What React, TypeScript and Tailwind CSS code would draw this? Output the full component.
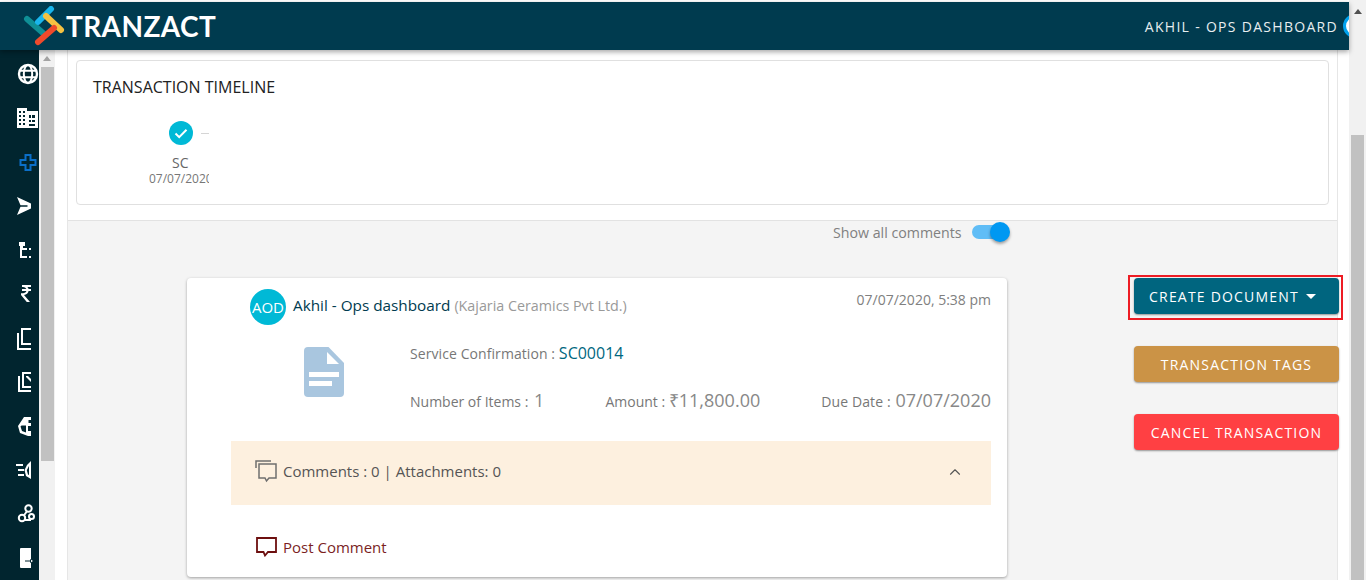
import { ChevronUp } from "lucide-react";

function Logo() {
  return (
    <svg width="44" height="40" viewBox="0 0 44 40" className="shrink-0">
      <g fill="none" strokeWidth="6" strokeLinecap="round">
        <path d="M4 13L20 27" stroke="#0f8f96" />
        <path d="M28 3L15 16" stroke="#19b5ec" />
        <path d="M23 10L38 24" stroke="#f5c242" />
        <path d="M31 22L15 36" stroke="#ef4a2c" />
      </g>
    </svg>
  );
}

function SideIcon({ children, w = 14, active = false }: { children: React.ReactNode; w?: number; active?: boolean }) {
  return (
    <div className={active ? "h-11 flex items-center pl-[17px] text-[#0b6fc9]" : "h-11 flex items-center pl-[17px] text-white"}>
      <svg width={w} height="24" viewBox={`0 0 ${w} 24`} fill="currentColor" className="shrink-0 overflow-visible">
        {children}
      </svg>
    </div>
  );
}

function Sidebar() {
  return (
    <aside className="w-[39px] shrink-0 bg-[#01252f] pt-[2px] overflow-hidden">
      <SideIcon w={22}>
        <circle cx="11" cy="12" r="9" fill="none" stroke="currentColor" strokeWidth="2.400" />
        <ellipse cx="11" cy="12" rx="4.200" ry="9" fill="none" stroke="currentColor" strokeWidth="2" />
        <path d="M2 8.800h18M2 15.200h18" stroke="currentColor" strokeWidth="2" />
      </SideIcon>
      <SideIcon w={22}>
        <path fillRule="evenodd" d="M0 2h10v3h11v17H0zM2 5v2h2V5zm4 0v2h2V5zM2 9v2h2V9zm4 0v2h2V9zM2 13v2h2v-2zm4 0v2h2v-2zM2 17v2h2v-2zm4 0v2h2v-2zM12 9v3h2V9zm3 0v3h3V9zM12 14v2h2v-2zm3 0v2h3v-2zM12 18v2h6v-2z" />
      </SideIcon>
      <SideIcon w={22} active>
        <path d="M8.500 5h5v5h5v5h-5v5h-5v-5h-5v-5h5z" fill="none" stroke="currentColor" strokeWidth="2" />
      </SideIcon>
      <SideIcon>
        <path d="M0 3L14 9.500v5L0 21l3.500-8.300h7v-1.400h-7z" />
      </SideIcon>
      <SideIcon>
        <path d="M2 4h6v4H6v2h4v2H5v6h5v2H3V8H2zM12 10h2v2h-2zM12 18h2v2h-2z" />
      </SideIcon>
      <SideIcon>
        <path d="M5 3h9v2h-3.600c.6.600 1 1.300 1.200 2H14v2h-2.400c-.4 2.300-2.200 3.800-4.600 4l6 7h-3.200L4 13v-1.800h2c1.700 0 3-.8 3.400-2.200H5V7h4.300C8.800 5.800 7.500 5 6 5H5z" />
      </SideIcon>
      <SideIcon>
        <path d="M4 2h10v2H6v13h8v2H4z" />
        <path d="M0 7h2v15h12v2H0z" />
      </SideIcon>
      <SideIcon>
        <path d="M5 2h9v2H7v12h7v2H5z" />
        <path d="M1 6h2v14h11v2H1z" />
        <path d="M9 6h2l3 3v3L9 7z" />
      </SideIcon>
      <SideIcon>
        <path fillRule="evenodd" d="M7 3h7v19h-3l-8-3-2-7zM4.500 11.500L3.500 12.500 5 17l4 1.500v-7zM11.500 6h2.500v3h-2.500zM11 12v5h3v-5z" />
      </SideIcon>
      <SideIcon>
        <path d="M-1 6h7v2h-7zM1 11h6v2H1zM1 16h6v2H1z" />
        <path fillRule="evenodd" d="M14 3v18l-5-3-1.500-6L10 7zM12 8L9.800 12.300 11 16.500l1 .6z" />
      </SideIcon>
      <SideIcon>
        <g fill="none" stroke="currentColor" strokeWidth="2">
          <circle cx="5" cy="16" r="3.200" />
          <circle cx="11.500" cy="6.500" r="3.200" />
          <path d="M9.800 9.500L6.500 14M8 18h6" />
          <circle cx="14.500" cy="14.500" r="2.500" />
        </g>
      </SideIcon>
      <SideIcon>
        <path fillRule="evenodd" d="M4 2h10v12.500h-1V13l3 2-3 2v-1.500H8v-1h6V22H4a1 1 0 0 1-1-1V3a1 1 0 0 1 1-1z" />
      </SideIcon>
    </aside>
  );
}

function ScrollBar({ thumbClass, arrowClass }: { thumbClass: string; arrowClass: string }) {
  return (
    <div className="w-full h-full flex flex-col items-center bg-[#f1f1f1] overflow-hidden">
      <div className={arrowClass} />
      <div className={thumbClass} />
    </div>
  );
}

function Timeline() {
  return (
    <section className="bg-white h-[171px] pt-[10px] px-2 border-b border-[#e2e2e2]">
      <div className="h-[145px] border border-[#e0e0e0] rounded-[4px] pl-4 pt-[15px]">
        <h2 className="text-[16px] leading-[22px] text-[#222]">TRANSACTION TIMELINE</h2>
        <div className="mt-[23px] ml-[56px] w-[60px] overflow-hidden">
          <div className="flex items-center h-6 pl-5">
            <div className="w-6 h-6 rounded-full bg-[#00b9d6] flex items-center justify-center shrink-0">
              <svg width="14" height="11" viewBox="0 0 14 11" fill="none">
                <path d="M1.500 5.500L5.200 9.200L12.500 1.800" stroke="#fff" strokeWidth="2" />
              </svg>
            </div>
            <div className="ml-2 w-2 h-px bg-[#d5d5d5]" />
          </div>
          <div className="flex flex-col mt-[9px]">
            <span className="text-[14px] leading-[18px] text-[#666] ml-[23px]">SC</span>
            <span className="text-[12px] leading-[14px] text-[#777] whitespace-nowrap">07/07/2020</span>
          </div>
        </div>
      </div>
    </section>
  );
}

function CommentCard() {
  return (
    <article className="ml-[119px] w-[820px] h-[299px] bg-white rounded-[4px] shadow-[0_1px_3px_rgba(0,0,0,0.35)] pl-[44px] pr-4">
      <div className="flex items-start pt-[11px] pl-[19px]">
        <div className="w-9 h-9 rounded-full bg-[#00b9d6] text-white text-[15px] flex items-center justify-center shrink-0">AOD</div>
        <p className="ml-[7px] mt-[6px] text-[15.300px] leading-5 text-[#003b4f]">
          Akhil - Ops dashboard <span className="text-[14.300px] text-[#999]">(Kajaria Ceramics Pvt Ltd.)</span>
        </p>
        <span className="ml-auto mt-[1px] text-[14px] leading-5 text-[#808080]">07/07/2020, 5:38 pm</span>
      </div>
      <div className="flex mt-[19px] h-[94px]">
        <svg width="40" height="50" viewBox="0 0 40 50" className="ml-[73px] mt-[3px] shrink-0">
          <path d="M4 0h20.500L40 16v30a4 4 0 0 1-4 4H4a4 4 0 0 1-4-4V4a4 4 0 0 1 4-4z" fill="#a9c6df" />
          <path d="M23 5l12 12H23z" fill="#fff" />
          <path d="M5 25h30v5H5zM5 34h23v5H5z" fill="#fff" />
        </svg>
        <div className="ml-[66px] flex-1">
          <p className="mt-[-1px] text-[14px] leading-5 font-medium text-[#777] tracking-[0.08px]">
            Service Confirmation : <span className="text-[16px] font-medium tracking-normal text-[#00677f]">SC00014</span>
          </p>
          <div className="flex justify-between items-baseline mt-[26px]">
            <p className="text-[14px] leading-5 font-medium text-[#777]">
              Number of Items : <span className="ml-[2px] text-[18px] font-normal text-[#888]">1</span>
            </p>
            <p className="text-[14px] leading-5 font-medium text-[#777]">
              Amount : <span className="text-[18px] font-normal text-[#888]">₹11,800.00</span>
            </p>
            <p className="text-[14px] leading-5 font-medium text-[#777] tracking-[0.1px]">
              Due Date : <span className="ml-[1px] text-[18px] font-normal tracking-normal text-[#888]">07/07/2020</span>
            </p>
          </div>
        </div>
      </div>
      <div className="h-16 bg-[#fdf0df] flex items-center pb-[3px] pl-[24px] pr-[27px] mt-[3px]">
        <svg width="22" height="23" viewBox="0 0 22 23" fill="none" stroke="#6f6f6f" strokeWidth="1.500" className="shrink-0">
          <path d="M1 8V1h15" />
          <path d="M4 11V4h17v14h-7l-2.500 3-1.500-3H4z" />
        </svg>
        <span className="ml-[6px] text-[15px] text-[#555]">Comments : 0 | Attachments: 0</span>
        <ChevronUp size={18} strokeWidth={1.500} className="ml-auto text-[#555]" />
      </div>
      <div className="flex items-center pl-[25px] mt-[32px]">
        <svg width="21" height="20" viewBox="0 0 21 20" fill="none" stroke="#6d0f0f" strokeWidth="1.800" className="shrink-0">
          <path d="M1 1h19v14h-8l-3 3.500L7.500 15H1z" />
        </svg>
        <span className="ml-[6px] text-[15px] leading-5 text-[#7b1f1f]">Post Comment</span>
      </div>
    </article>
  );
}

function ActionButtons() {
  const base = "w-[205px] h-9 rounded-[4px] text-white text-[14px] font-medium tracking-[1.200px] flex items-center justify-center shadow-[0_1px_2px_rgba(0,0,0,0.4)]";
  return (
    <div className="w-[215px] shrink-0 flex flex-col items-start mr-[-6px] mt-[54px]">
      <div className="border-2 border-[#ed1c24] pl-1 pr-[2px] pt-[1px] h-[45px] w-[215px]">
        <button className={`${base} bg-[#00657f] pr-2`}>
          CREATE DOCUMENT
          <span className="ml-[7px] w-0 h-0 border-x-[5px] border-x-transparent border-t-[5px] border-t-white" />
        </button>
      </div>
      <button className={`${base} bg-[#cb9346] mt-[26px] ml-[6px]`}>TRANSACTION TAGS</button>
      <button className={`${base} bg-[#ff4043] mt-8 ml-[6px]`}>CANCEL TRANSACTION</button>
    </div>
  );
}

export default function App() {
  return (
    <div className="h-[580px] w-[1366px] overflow-hidden flex bg-white font-['Open_Sans',sans-serif]">
      <div className="w-[1349px] h-full flex flex-col pt-[2px]">
        <header className="h-12 shrink-0 bg-[#003b4f] flex items-center pl-[23px] overflow-hidden shadow-[0_2px_5px_rgba(0,0,0,0.35)] relative z-10">
          <Logo />
          <span className="ml-[-1px] text-white text-[28px] leading-none font-bold tracking-[0.4px] font-['Lato',sans-serif]">TRANZACT</span>
          <span className="ml-auto text-[#e8eef0] text-[14px] font-medium tracking-[1.300px]">AKHIL - OPS DASHBOARD</span>
          <div className="ml-[5px] mr-[-18px] w-6 h-6 rounded-full bg-white border-[3px] border-[#00a2ee] shrink-0" />
        </header>
        <div className="flex-1 flex min-h-0">
          <Sidebar />
          <div className="w-4 shrink-0">
            <ScrollBar
              arrowClass="mt-[6px] w-0 h-0 border-x-[4px] border-x-transparent border-b-[5px] border-b-[#a3a3a3]"
              thumbClass="mt-[6px] w-[13px] h-[394px] bg-[#c1c1c1] shrink-0"
            />
          </div>
          <div className="flex-1 pl-3 pr-[11px] min-w-0">
            <main className="h-full border-x border-[#e6e6e6] bg-[#f4f4f4] overflow-visible">
              <Timeline />
              <div className="flex justify-between">
                <div className="flex-1">
                  <div className="flex items-center h-[22px] ml-[765px]">
                    <span className="pt-[2px] text-[14.200px] leading-5 text-[#808080]">Show all comments</span>
                    <div className="ml-[10px] relative w-[38px] h-[22px] flex items-center">
                      <div className="w-[28px] h-[14px] rounded-full bg-[#60bdf6]" />
                      <div className="absolute right-0 top-px w-5 h-5 rounded-full bg-[#0098f2] shadow-[0_2px_3px_rgba(0,0,0,0.35)]" />
                    </div>
                  </div>
                  <div className="mt-[35px]">
                    <CommentCard />
                  </div>
                </div>
                <ActionButtons />
              </div>
            </main>
          </div>
        </div>
      </div>
      <div className="w-[17px] shrink-0 h-full">
        <ScrollBar
          arrowClass="mt-[9px] w-0 h-0 border-x-[4px] border-x-transparent border-b-[5px] border-b-[#505050]"
          thumbClass="mt-[121px] w-[13px] h-[445px] bg-[#c1c1c1] shrink-0"
        />
      </div>
    </div>
  );
}
